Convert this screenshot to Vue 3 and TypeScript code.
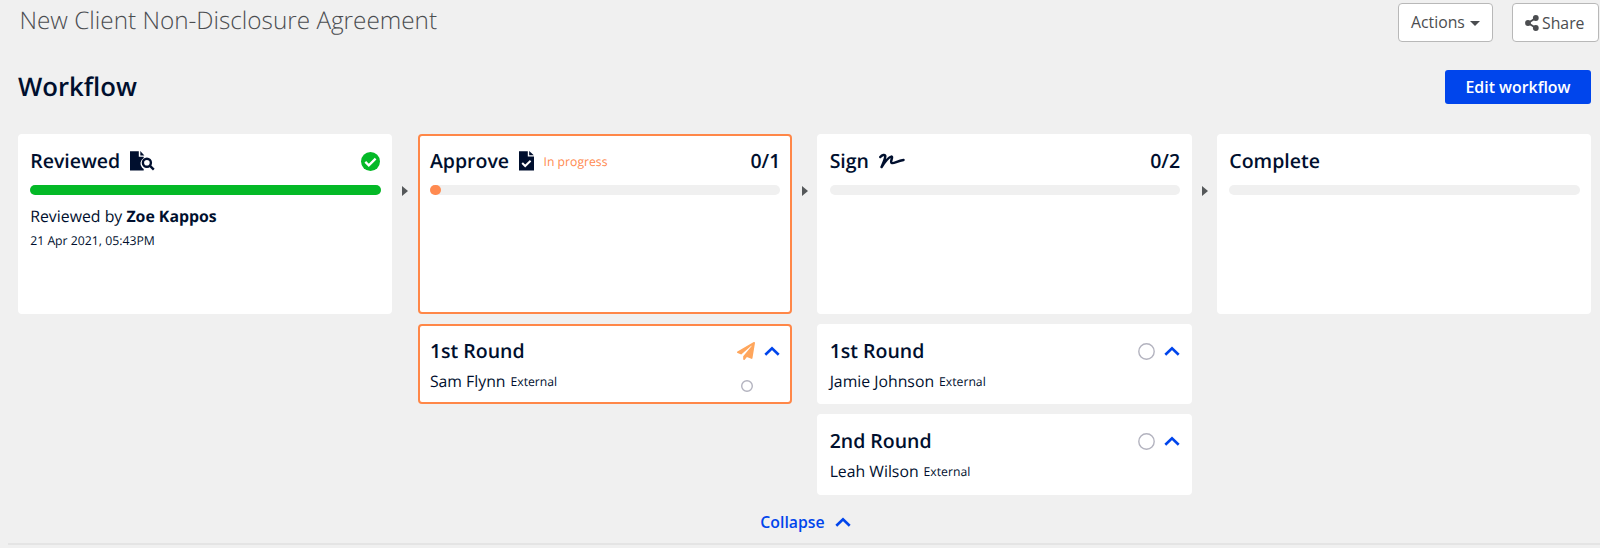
<script setup lang="ts">
interface Round {
  title: string
  person: string
  sent: boolean
}

interface Stage {
  title: string
  icon: 'review' | 'approve' | 'sign' | null
  count?: string
  status?: string
  done?: boolean
  active?: boolean
  progress: number
  rounds: Round[]
}

const stages: Stage[] = [
  { title: 'Reviewed', icon: 'review', done: true, progress: 100, rounds: [] },
  {
    title: 'Approve',
    icon: 'approve',
    status: 'In progress',
    count: '0/1',
    active: true,
    progress: 3.3,
    rounds: [{ title: '1st Round', person: 'Sam Flynn', sent: true }],
  },
  {
    title: 'Sign',
    icon: 'sign',
    count: '0/2',
    progress: 0,
    rounds: [
      { title: '1st Round', person: 'Jamie Johnson', sent: false },
      { title: '2nd Round', person: 'Leah Wilson', sent: false },
    ],
  },
  { title: 'Complete', icon: null, progress: 0, rounds: [] },
]
</script>

<template>
  <main class="page">
    <header class="topbar">
      <h1 class="doc-title">New Client Non-Disclosure Agreement</h1>
      <div class="buttons">
        <button class="btn actions">Actions<span class="caret"></span></button>
        <button class="btn share">
          <svg width="14" height="16" viewBox="0 0 14 16">
            <path d="M11 3 3 8l8 5" fill="none" stroke="currentColor" stroke-width="1.9" />
            <circle cx="10.8" cy="3" r="2.9" fill="currentColor" />
            <circle cx="3" cy="8" r="2.9" fill="currentColor" />
            <circle cx="10.8" cy="13" r="2.9" fill="currentColor" />
          </svg>
          <span>Share</span>
        </button>
      </div>
    </header>

    <div class="section-head">
      <h2 class="section-title">Workflow</h2>
      <button class="edit">Edit workflow</button>
    </div>

    <div class="board">
      <template v-for="(stage, i) in stages" :key="stage.title">
        <div v-if="i > 0" class="arrow"><span></span></div>
        <section class="column">
          <article class="card stage" :class="{ active: stage.active }">
            <div class="card-head">
              <h3 class="card-title">{{ stage.title }}</h3>
              <svg v-if="stage.icon === 'review'" class="icon" width="25" height="20" viewBox="0 0 25 20">
                <path d="M0 .3h8.8v5.5h4.9v1.1a6.4 6.4 0 0 0-1.6 9.9l1.6 1.3v1.4H0z" fill="currentColor" />
                <path d="M10.3 0 14.4 4.4h-4.1z" fill="currentColor" />
                <circle cx="16.9" cy="11.7" r="4" fill="none" stroke="currentColor" stroke-width="2.4" />
                <path d="m19.8 14.6 4 4" fill="none" stroke="currentColor" stroke-width="2.4" />
              </svg>
              <svg v-else-if="stage.icon === 'approve'" class="icon" width="15" height="20" viewBox="0 0 15 20">
                <path d="M0 .3h8.8v5.3H15v14H0z" fill="currentColor" />
                <path d="m10.2 0 4.6 4.3h-4.6z" fill="currentColor" />
                <path d="m3.2 12 3 3L11.6 9.8" fill="none" stroke="#fff" stroke-width="2" />
              </svg>
              <svg v-else-if="stage.icon === 'sign'" class="icon" width="26" height="16" viewBox="0 0 26 16">
                <path d="M1.3 4C3.3 1.7 6 1.3 6.3 2.9 6.5 5 4.5 9.5 2.6 14 5.5 9.5 9.5 4.2 12.3 3.6c2.2 0-1.6 5.2.4 6.4 2 1 5.4-2 11.8-3" fill="none" stroke="currentColor" stroke-width="2.5" stroke-linecap="round" stroke-linejoin="round" />
              </svg>
              <span v-if="stage.status" class="status">{{ stage.status }}</span>
              <span v-if="stage.count" class="count">{{ stage.count }}</span>
              <svg v-if="stage.done" class="done" width="19" height="19" viewBox="0 0 19 19">
                <circle cx="9.5" cy="9.5" r="9.5" fill="#04b927" />
                <path d="m4.3 9.9 3.5 3.4 6.8-6.7" fill="none" stroke="#fff" stroke-width="2.3" />
              </svg>
            </div>
            <div class="track">
              <div class="fill" :class="{ pending: stage.active }" :style="{ width: stage.progress + '%' }"></div>
            </div>
            <template v-if="stage.done">
              <p class="reviewer">Reviewed by <strong>Zoe Kappos</strong></p>
              <p class="date">21 Apr 2021, 05:43PM</p>
            </template>
          </article>

          <article v-for="round in stage.rounds" :key="round.title" class="card round" :class="{ active: stage.active }">
            <div class="card-head">
              <h3 class="card-title">{{ round.title }}</h3>
              <div class="round-icons">
                <svg v-if="round.sent" width="18" height="18" viewBox="0 0 512 512">
                  <path fill="#ffa65c" d="M476 3.2 12.5 270.6c-18.1 10.4-15.8 35.6 2.2 43.2L121 358.4l287.3-253.2c5.5-4.9 13.3 2.6 8.6 8.3L176 407v80.5c0 23.6 28.5 32.9 42.5 15.8L282 426l124.6 52.2c14.2 6 30.4-2.9 33-18.2l72-432C515 7.8 493.3-6.8 476 3.2z" />
                </svg>
                <svg v-else width="17" height="17" viewBox="0 0 17 17">
                  <circle class="ring" cx="8.5" cy="8.5" r="7.7" />
                </svg>
                <svg class="chevron" width="16" height="10" viewBox="0 0 16 10">
                  <path d="m1.3 8.7 6.7-6.5 6.7 6.5" />
                </svg>
              </div>
            </div>
            <div class="person">
              <span class="name">{{ round.person }}</span>
              <span class="kind">External</span>
              <svg v-if="round.sent" class="person-state" width="12" height="12" viewBox="0 0 12 12">
                <circle class="ring" cx="6" cy="6" r="5.3" />
              </svg>
            </div>
          </article>
        </section>
      </template>
    </div>

    <footer class="footer">
      <button class="collapse">
        <span>Collapse</span>
        <svg class="chevron" width="16" height="10" viewBox="0 0 16 10">
          <path d="m1.3 8.7 6.7-6.5 6.7 6.5" />
        </svg>
      </button>
    </footer>
  </main>
</template>

<style>
html,
body {
  background: #f0f0f0;
  overflow: hidden;
}
</style>

<style scoped>
.page {
  box-sizing: border-box;
  width: 1600px;
  height: 548px;
  overflow: hidden;
  background: #f0f0f0;
  color: #000f2e;
  font-family: "Open Sans", "Noto Sans", sans-serif;
  text-rendering: geometricPrecision;
}

h1,
h2,
h3,
p {
  margin: 0;
}

button {
  font: inherit;
  border: 0;
  padding: 0;
  background: none;
}

.topbar {
  display: flex;
  justify-content: space-between;
  height: 42px;
  padding: 0 1px 0 19.5px;
}

.doc-title {
  color: #4b4d50;
  font-size: 24.3px;
  font-weight: 300;
  line-height: 41px;
}

.buttons {
  display: flex;
  gap: 19px;
  padding-top: 3px;
}

.btn {
  box-sizing: border-box;
  display: flex;
  align-items: center;
  height: 39px;
  border: 1px solid #b8b8b8;
  border-radius: 4px;
  background: #fff;
  color: #4b4d50;
  font-size: 15.8px;
}

.actions {
  width: 95px;
  padding: 0 0 1px 12px;
}

.share {
  width: 87px;
  padding-left: 12px;
  gap: 3px;
}

.caret {
  margin: 3px 0 0 5px;
  border: 5px solid transparent;
  border-top: 5px solid #4b4d50;
  border-bottom: 0;
}

.section-head {
  display: flex;
  align-items: center;
  justify-content: space-between;
  height: 92px;
  padding: 0 9px 3px 18px;
  box-sizing: border-box;
}

.section-title {
  font-size: 25.7px;
  font-weight: 600;
  line-height: 36px;
}

.edit {
  width: 146px;
  height: 34px;
  border-radius: 3px;
  background: #0045ec;
  color: #fff;
  font-size: 15.9px;
  font-weight: 600;
}

.board {
  display: flex;
  height: 361px;
  padding: 0 8.5px 0 18px;
}

.column {
  display: flex;
  flex: 1 1 0;
  flex-direction: column;
  gap: 10px;
  min-width: 0;
}

.arrow {
  width: 25.4px;
  padding: 51.5px 0 0 10px;
  box-sizing: border-box;
}

.arrow span {
  display: block;
  width: 0;
  height: 0;
  border: 5px solid transparent;
  border-left: 6px solid #55585a;
  border-right: 0;
}

.card {
  box-sizing: border-box;
  border: 2px solid #fff;
  border-radius: 4px;
  padding: 12px 9.7px 0 10.2px;
  background: #fff;
}

.card.active {
  border-color: #ff8748;
}

.stage {
  height: 180px;
}

.round {
  height: 80.4px;
}

.card-head {
  display: flex;
  align-items: center;
  height: 26px;
}

.card-title,
.count {
  font-size: 19.5px;
  font-weight: 600;
  line-height: 26px;
}

.count {
  margin-left: auto;
}

.icon {
  margin-left: 10px;
}

.status {
  margin-left: 9.5px;
  color: #ff8a50;
  font-size: 12.2px;
}

.done {
  margin: 0 .8px 0 auto;
}

.track {
  height: 10px;
  margin-top: 11px;
  border-radius: 5px;
  background: #f0f0f0;
}

.fill {
  height: 10px;
  border-radius: 5px;
  background: #04b927;
}

.fill.pending {
  background: #ff8a50;
}

.reviewer {
  margin-top: 10px;
  font-size: 15.85px;
  line-height: 23px;
}

.reviewer strong {
  font-weight: 700;
}

.date {
  margin-top: 2px;
  font-size: 12.25px;
  line-height: 22px;
}

.round-icons {
  display: flex;
  align-items: center;
  gap: 9px;
  margin-left: auto;
}

.chevron {
  display: block;
  fill: none;
  stroke: #0045ec;
  stroke-width: 2.6px;
}

.ring {
  fill: none;
  stroke: #b3b3bf;
  stroke-width: 1.4px;
}

.person-state {
  margin: 9px 27.5px 0 auto;
}

.person {
  display: flex;
  align-items: center;
  height: 24px;
  margin-top: 5px;
}

.name {
  font-size: 15.8px;
}

.kind {
  margin-left: 5px;
  font-size: 12.2px;
}

.footer {
  display: flex;
  justify-content: center;
  height: 50px;
  margin-left: 8px;
  padding: 15px 0 0 3px;
  box-sizing: border-box;
  border-bottom: 2px solid #e4e4e4;
}

.collapse {
  display: flex;
  align-items: center;
  gap: 10px;
  height: 24px;
  color: #0045ec;
  font-size: 15.8px;
  font-weight: 600;
}
</style>
